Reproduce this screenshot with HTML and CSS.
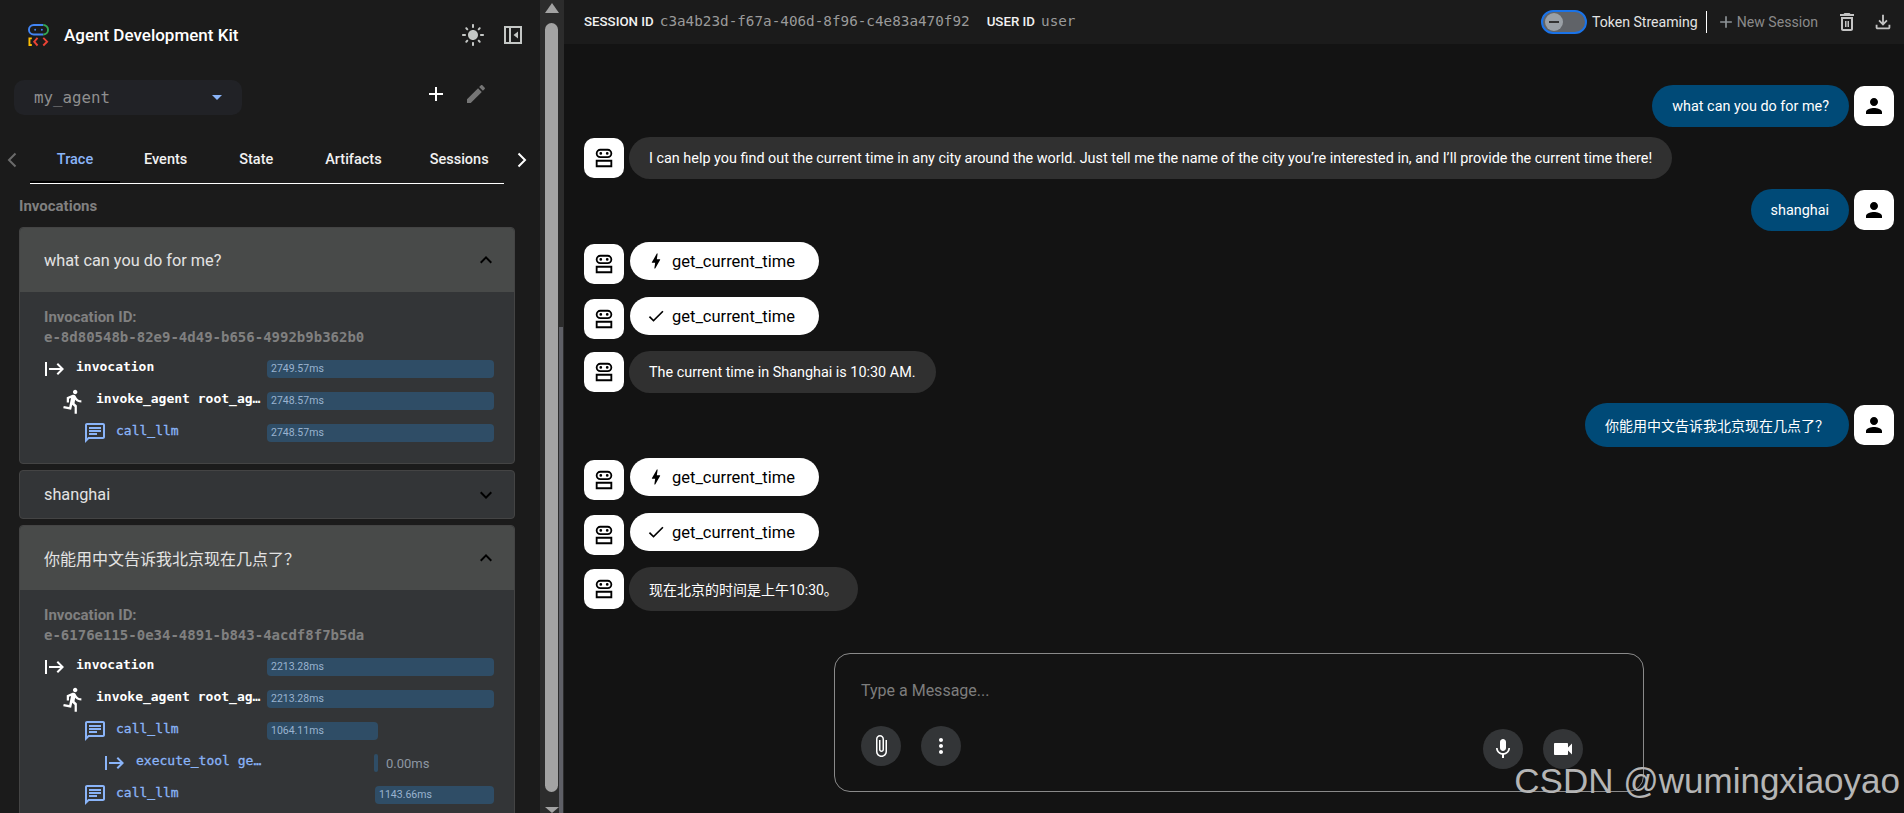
FILE: index.html
```html
<!DOCTYPE html>
<html lang="en">
<head>
  <meta charset="UTF-8" />
  <meta name="viewport" content="width=device-width, initial-scale=1.0"/>
  <title>Agent Development Kit</title>
  <link rel="stylesheet" href="styles.css">
</head>
<body>

  <svg class="sprite" xmlns="http://www.w3.org/2000/svg">
    <symbol id="i-sun" viewBox="0 0 24 24"><path d="M12 7c-2.76 0-5 2.24-5 5s2.24 5 5 5 5-2.24 5-5-2.24-5-5-5zM2 13h2c.55 0 1-.45 1-1s-.45-1-1-1H2c-.55 0-1 .45-1 1s.45 1 1 1zm18 0h2c.55 0 1-.45 1-1s-.45-1-1-1h-2c-.55 0-1 .45-1 1s.45 1 1 1zM11 2v2c0 .55.45 1 1 1s1-.45 1-1V2c0-.55-.45-1-1-1s-1 .45-1 1zm0 18v2c0 .55.45 1 1 1s1-.45 1-1v-2c0-.55-.45-1-1-1s-1 .45-1 1zM5.99 4.58c-.39-.39-1.03-.39-1.41 0-.39.39-.39 1.03 0 1.41l1.06 1.06c.39.39 1.03.39 1.41 0s.39-1.03 0-1.41L5.99 4.58zm12.37 12.37c-.39-.39-1.03-.39-1.41 0-.39.39-.39 1.03 0 1.41l1.06 1.06c.39.39 1.03.39 1.41 0 .39-.39.39-1.03 0-1.41l-1.06-1.06zm1.06-10.96c.39-.39.39-1.03 0-1.41-.39-.39-1.03-.39-1.41 0l-1.06 1.06c-.39.39-.39 1.03 0 1.41s1.03.39 1.41 0l1.06-1.06zM7.05 18.36c.39-.39.39-1.03 0-1.41-.39-.39-1.03-.39-1.41 0l-1.06 1.06c-.39.39-.39 1.03 0 1.41s1.03.39 1.41 0l1.06-1.06z"/></symbol>
    <symbol id="i-panel" viewBox="0 0 24 24"><path d="M3 3h18v18H3V3zm2 2v14h3V5H5zm5 0v14h9V5h-9zm7 3.5v7L12.5 12 17 8.5z"/></symbol>
    <symbol id="i-add" viewBox="0 0 24 24"><path d="M19 13h-6v6h-2v-6H5v-2h6V5h2v6h6v2z"/></symbol>
    <symbol id="i-edit" viewBox="0 0 24 24"><path d="M3 17.25V21h3.75L17.81 9.94l-3.75-3.75L3 17.25zM20.71 7.04c.39-.39.39-1.02 0-1.41l-2.34-2.34c-.39-.39-1.02-.39-1.41 0l-1.83 1.83 3.75 3.75 1.83-1.83z"/></symbol>
    <symbol id="i-less" viewBox="0 0 24 24"><path d="M12 8l-6 6 1.41 1.41L12 10.83l4.59 4.58L18 14z"/></symbol>
    <symbol id="i-more" viewBox="0 0 24 24"><path d="M16.59 8.59L12 13.17 7.41 8.59 6 10l6 6 6-6z"/></symbol>
    <symbol id="i-start" viewBox="0 0 24 24"><path d="M3 5v14h2V5zm13 1-1.41 1.41L18.17 11H7v2h11.17l-3.58 3.59L16 18l6-6z"/></symbol>
    <symbol id="i-run" viewBox="0 0 24 24"><path d="M13.49 5.48c1.1 0 2-.9 2-2s-.9-2-2-2-2 .9-2 2 .9 2 2 2zm-3.6 13.9l1-4.4 2.1 2v6h2v-7.5l-2.1-2 .6-3c1.3 1.5 3.3 2.5 5.5 2.5v-2c-1.9 0-3.5-1-4.3-2.4l-1-1.6c-.4-.6-1-1-1.7-1-.3 0-.5.1-.8.1l-5.2 2.2v4.7h2v-3.4l1.8-.7-1.6 8.1-4.9-1-.4 2 7 1.4z"/></symbol>
    <symbol id="i-chat" viewBox="0 0 24 24"><path d="M20 2H4c-1.1 0-1.99.9-1.99 2L2 22l4-4h14c1.1 0 2-.9 2-2V4c0-1.1-.9-2-2-2zm0 14H5.17L4 17.17V4h16v12zM6 12h8v2H6zm0-3h12v2H6zm0-3h12v2H6z"/></symbol>
    <symbol id="i-robot" viewBox="0 0 24 24"><path d="M8 2h8a5 5 0 0 1 0 10H8A5 5 0 0 1 8 2zm0 2a3 3 0 0 0 0 6h8a3 3 0 0 0 0-6H8zm.5 1.5a1.5 1.5 0 1 1 0 3 1.5 1.5 0 0 1 0-3zm7 0a1.5 1.5 0 1 1 0 3 1.5 1.5 0 0 1 0-3zM3 14h18v8H3v-8zm2 2v4h14v-4H5z"/></symbol>
    <symbol id="i-person" viewBox="0 0 24 24"><path d="M12 12c2.21 0 4-1.79 4-4s-1.79-4-4-4-4 1.79-4 4 1.79 4 4 4zm0 2c-2.67 0-8 1.34-8 4v2h16v-2c0-2.66-5.33-4-8-4z"/></symbol>
    <symbol id="i-bolt" viewBox="0 0 24 24"><path d="M11 21h-1l1-7H7.5c-.58 0-.57-.32-.38-.66.19-.34.05-.08.07-.12C8.48 10.94 10.42 7.54 13 3h1l-1 7h3.5c.49 0 .56.33.47.51l-.07.15C12.96 17.55 11 21 11 21z"/></symbol>
    <symbol id="i-check" viewBox="0 0 24 24"><path d="M9 16.17L4.83 12l-1.42 1.41L9 19 21 7l-1.41-1.41z"/></symbol>
    <symbol id="i-trash" viewBox="0 0 24 24"><path d="M6 19c0 1.1.9 2 2 2h8c1.1 0 2-.9 2-2V7H6v12zM8 9h8v10H8V9zm7.5-5l-1-1h-5l-1 1H5v2h14V4zM10 11h1.5v6H10zm2.5 0H14v6h-1.5z"/></symbol>
    <symbol id="i-download" viewBox="0 0 24 24"><path d="M18 15v3H6v-3H4v3c0 1.1.9 2 2 2h12c1.1 0 2-.9 2-2v-3h-2zm-1-4l-1.41-1.41L13 12.17V4h-2v8.17L8.41 9.59 7 11l5 5 5-5z"/></symbol>
    <symbol id="i-clip" viewBox="0 0 24 24"><path d="M16.5 6v11.5c0 2.21-1.79 4-4 4s-4-1.79-4-4V5c0-1.38 1.12-2.5 2.5-2.5s2.5 1.12 2.5 2.5v10.5c0 .55-.45 1-1 1s-1-.45-1-1V6H10v9.5c0 1.38 1.12 2.5 2.5 2.5s2.5-1.12 2.5-2.5V5c0-2.21-1.79-4-4-4S7 2.79 7 5v12.5c0 3.04 2.46 5.5 5.5 5.5s5.5-2.46 5.5-5.5V6h-1.5z"/></symbol>
    <symbol id="i-dots" viewBox="0 0 24 24"><path d="M12 8c1.1 0 2-.9 2-2s-.9-2-2-2-2 .9-2 2 .9 2 2 2zm0 2c-1.1 0-2 .9-2 2s.9 2 2 2 2-.9 2-2-.9-2-2-2zm0 6c-1.1 0-2 .9-2 2s.9 2 2 2 2-.9 2-2-.9-2-2-2z"/></symbol>
    <symbol id="i-mic" viewBox="0 0 24 24"><path d="M12 14c1.66 0 3-1.34 3-3V5c0-1.66-1.34-3-3-3S9 3.34 9 5v6c0 1.66 1.34 3 3 3zm5.3-3c0 3-2.54 5.1-5.3 5.1S6.7 14 6.7 11H5c0 3.41 2.72 6.23 6 6.72V21h2v-3.28c3.28-.48 6-3.3 6-6.72h-1.7z"/></symbol>
    <symbol id="i-video" viewBox="0 0 24 24"><path d="M17 10.5V7c0-.55-.45-1-1-1H4c-.55 0-1 .45-1 1v10c0 .55.45 1 1 1h12c.55 0 1-.45 1-1v-3.5l4 4v-11l-4 4z"/></symbol>
  </svg>

  <aside class="sidebar">
    <div class="side-head">
      <svg class="logo" viewBox="0 0 22 24" fill="none" stroke-width="2">
        <path d="M16 11.5H6A5 5 0 0 1 6 1.5h10" stroke="#4285f4"/>
        <path d="M16 1.500a5 5 0 0 1 0 10" stroke="#34a853"/>
        <circle cx="7.5" cy="6.5" r="1" fill="#4285f4" stroke="none"/>
        <circle cx="14.5" cy="6.5" r="1" fill="#4285f4" stroke="none"/>
        <path d="M4 15.5H1.5v7H4" stroke="#fbbc04"/>
        <path d="M10 15l-3.500 4 3.500 4" stroke="#ea4335"/>
        <path d="M16 15l4 4-4 4" stroke="#ea4335"/>
      </svg>
      <span class="app-title">Agent Development Kit</span>
      <svg class="ic ic-sun"><use href="#i-sun"/></svg>
      <svg class="ic ic-panel"><use href="#i-panel"/></svg>
    </div>

    <div class="agent-row">
      <div class="agent-select">
        <span>my_agent</span>
        <i class="caret"></i>
      </div>
      <svg class="ic ic-add"><use href="#i-add"/></svg>
      <svg class="ic ic-edit"><use href="#i-edit"/></svg>
    </div>

    <div class="tabs">
      <svg class="tab-arrow dim" viewBox="0 0 10 16"><path d="M8.5 1.5L2 8l6.5 6.5"/></svg>
      <div class="tab-list">
        <div class="tab active">Trace</div>
        <div class="tab">Events</div>
        <div class="tab">State</div>
        <div class="tab">Artifacts</div>
        <div class="tab">Sessions</div>
      </div>
      <svg class="tab-arrow" viewBox="0 0 10 16"><path d="M1.5 1.5L8 8l-6.5 6.500"/></svg>
    </div>

    <div class="section-label">Invocations</div>

    <div class="accordion">
      <div class="panel">
        <div class="panel-head open">
          <span>what can you do for me?</span>
          <svg class="ic ic-chev"><use href="#i-less"/></svg>
        </div>
        <div class="panel-body">
          <div class="inv-label">Invocation ID:</div>
          <div class="inv-id">e-8d80548b-82e9-4d49-b656-4992b9b362b0</div>
          <div class="spans">
            <div class="span-row">
              <div class="span-name"><svg class="ic"><use href="#i-start"/></svg><span>invocation</span></div>
              <div class="span-track"><div class="bar" style="width:100%">2749.57ms</div></div>
            </div>
            <div class="span-row lv1">
              <div class="span-name"><svg class="ic"><use href="#i-run"/></svg><span>invoke_agent root_ag…</span></div>
              <div class="span-track"><div class="bar" style="width:100%">2748.57ms</div></div>
            </div>
            <div class="span-row lv2 llm">
              <div class="span-name"><svg class="ic"><use href="#i-chat"/></svg><span>call_llm</span></div>
              <div class="span-track"><div class="bar" style="width:100%">2748.57ms</div></div>
            </div>
          </div>
        </div>
      </div>

      <div class="panel">
        <div class="panel-head">
          <span>shanghai</span>
          <svg class="ic ic-chev"><use href="#i-more"/></svg>
        </div>
      </div>

      <div class="panel">
        <div class="panel-head open head-cjk">
          <span>你能用中文告诉我北京现在几点了？</span>
          <svg class="ic ic-chev"><use href="#i-less"/></svg>
        </div>
        <div class="panel-body">
          <div class="inv-label">Invocation ID:</div>
          <div class="inv-id">e-6176e115-0e34-4891-b843-4acdf8f7b5da</div>
          <div class="spans">
            <div class="span-row">
              <div class="span-name"><svg class="ic"><use href="#i-start"/></svg><span>invocation</span></div>
              <div class="span-track"><div class="bar" style="width:100%">2213.28ms</div></div>
            </div>
            <div class="span-row lv1">
              <div class="span-name"><svg class="ic"><use href="#i-run"/></svg><span>invoke_agent root_ag…</span></div>
              <div class="span-track"><div class="bar" style="width:100%">2213.28ms</div></div>
            </div>
            <div class="span-row lv2 llm">
              <div class="span-name"><svg class="ic"><use href="#i-chat"/></svg><span>call_llm</span></div>
              <div class="span-track"><div class="bar" style="width:48.9%">1064.11ms</div></div>
            </div>
            <div class="span-row lv3 llm">
              <div class="span-name"><svg class="ic"><use href="#i-start"/></svg><span>execute_tool ge…</span></div>
              <div class="span-track"><div class="bar bar-thin" style="margin-left:47.1%"></div><span class="bar-out">0.00ms</span></div>
            </div>
            <div class="span-row lv2 llm">
              <div class="span-name"><svg class="ic"><use href="#i-chat"/></svg><span>call_llm</span></div>
              <div class="span-track"><div class="bar" style="margin-left:47.6%;width:52.4%">1143.66ms</div></div>
            </div>
          </div>
        </div>
      </div>
    </div>
  </aside>

  <div class="scrollbar">
    <i class="sb-up"></i>
    <div class="sb-thumb"></div>
    <i class="sb-down"></i>
    <div class="resize-handle"></div>
  </div>

  <main class="main">
    <div class="topbar">
      <span class="meta-label">SESSION ID</span>
      <span class="meta-value">c3a4b23d-f67a-406d-8f96-c4e83a470f92</span>
      <span class="meta-label user-label">USER ID</span>
      <span class="meta-value">user</span>
      <div class="top-actions">
        <div class="toggle"><div class="toggle-knob"></div></div>
        <span class="toggle-text">Token Streaming</span>
        <i class="top-sep"></i>
        <svg class="ic ic-new"><use href="#i-add"/></svg>
        <span class="new-session">New Session</span>
        <svg class="ic ic-trash"><use href="#i-trash"/></svg>
        <svg class="ic ic-download"><use href="#i-download"/></svg>
      </div>
    </div>

    <div class="messages">
      <div class="msg msg-user">
        <div class="bubble user">what can you do for me?</div>
        <div class="avatar"><svg class="ic"><use href="#i-person"/></svg></div>
      </div>
      <div class="msg">
        <div class="avatar"><svg class="ic ic-robot"><use href="#i-robot"/></svg></div>
        <div class="bubble">I can help you find out the current time in any city around the world. Just tell me the name of the city you’re interested in, and I’ll provide the current time there!</div>
      </div>
      <div class="msg msg-user">
        <div class="bubble user">shanghai</div>
        <div class="avatar"><svg class="ic"><use href="#i-person"/></svg></div>
      </div>
      <div class="msg msg-tool">
        <div class="avatar"><svg class="ic ic-robot"><use href="#i-robot"/></svg></div>
        <div class="tool-pill"><svg class="ic"><use href="#i-bolt"/></svg>get_current_time</div>
      </div>
      <div class="msg msg-tool">
        <div class="avatar"><svg class="ic ic-robot"><use href="#i-robot"/></svg></div>
        <div class="tool-pill"><svg class="ic"><use href="#i-check"/></svg>get_current_time</div>
      </div>
      <div class="msg">
        <div class="avatar"><svg class="ic ic-robot"><use href="#i-robot"/></svg></div>
        <div class="bubble">The current time in Shanghai is 10:30 AM.</div>
      </div>
      <div class="msg msg-user msg-cjk">
        <div class="bubble user">你能用中文告诉我北京现在几点了？</div>
        <div class="avatar"><svg class="ic"><use href="#i-person"/></svg></div>
      </div>
      <div class="msg msg-tool">
        <div class="avatar"><svg class="ic ic-robot"><use href="#i-robot"/></svg></div>
        <div class="tool-pill"><svg class="ic"><use href="#i-bolt"/></svg>get_current_time</div>
      </div>
      <div class="msg msg-tool">
        <div class="avatar"><svg class="ic ic-robot"><use href="#i-robot"/></svg></div>
        <div class="tool-pill"><svg class="ic"><use href="#i-check"/></svg>get_current_time</div>
      </div>
      <div class="msg msg-cjk">
        <div class="avatar"><svg class="ic ic-robot"><use href="#i-robot"/></svg></div>
        <div class="bubble">现在北京的时间是上午10:30。</div>
      </div>
    </div>

    <div class="composer">
      <div class="placeholder">Type a Message...</div>
      <div class="composer-tools">
        <div class="round-btn"><svg class="ic"><use href="#i-clip"/></svg></div>
        <div class="round-btn"><svg class="ic"><use href="#i-dots"/></svg></div>
        <div class="tools-right">
          <div class="round-btn"><svg class="ic"><use href="#i-mic"/></svg></div>
          <div class="round-btn"><svg class="ic"><use href="#i-video"/></svg></div>
        </div>
      </div>
    </div>
  </main>

  <div class="watermark">CSDN @wumingxiaoyao</div>

</body>
</html>
```

FILE: styles.css
```css
* { box-sizing: border-box; }
html, body { height: 100%; }
body {
  margin: 0;
  display: flex;
  height: 813px;
  overflow: hidden;
  background: #131313;
  color: #e3e3e3;
  font-family: Roboto, "Noto Sans CJK SC", sans-serif;
  font-size: 14.4px;
}
.sprite { display: none; }
.ic {
  display: block;
  width: 24px;
  height: 24px;
  fill: currentColor;
  flex: none;
}

/* sidebar */
.sidebar {
  width: 540px;
  flex: none;
  height: 813px;
  overflow: hidden;
  background: #1b1b1b;
}
.side-head {
  height: 70px;
  display: flex;
  align-items: center;
  padding-left: 28px;
}
.logo { width: 21px; height: 24px; flex: none; }
.app-title {
  margin-left: 15px;
  font-size: 17px;
  font-weight: 500;
  color: #fff;
}
.ic-sun { margin-left: auto; color: #c4c7c5; }
.ic-panel { margin-left: 16px; margin-right: 15px; color: #c4c7c5; }

.agent-row {
  display: flex;
  align-items: center;
  height: 35px;
  margin-top: 10px;
  padding-left: 14px;
}
.agent-select {
  width: 228px;
  height: 35px;
  display: flex;
  align-items: center;
  justify-content: space-between;
  padding: 0 20px;
  background: #212226;
  border-radius: 10px;
  color: #8f8f8f;
  font-family: "DejaVu Sans Mono", monospace;
  font-size: 15.8px;
}
.caret {
  width: 0;
  height: 0;
  border-left: 5px solid transparent;
  border-right: 5px solid transparent;
  border-top: 5px solid #8ab4f8;
}
.ic-add { margin-left: 182px; margin-top: -7px; color: #fff; }
.ic-edit { margin-left: 16px; margin-top: -7px; color: #757575; }

.tabs {
  display: flex;
  align-items: center;
  height: 49px;
  margin-top: 20px;
  padding-left: 7px;
}
.tab-arrow {
  width: 10px;
  height: 16px;
  flex: none;
  fill: none;
  stroke: #fff;
  stroke-width: 2;
}
.tab-arrow.dim { stroke: #6b6b6b; }
.tab-list {
  width: 474px;
  height: 49px;
  margin: 0 13px;
  display: flex;
  overflow: hidden;
  border-bottom: 1px solid #fff;
}
.tab {
  min-width: 90px;
  flex: none;
  padding: 0 24px;
  line-height: 50px;
  text-align: center;
  color: #f1f1f1;
  font-size: 14.5px;
  font-weight: 500;
}
.tab.active {
  color: #8ab4f8;
  border-bottom: 2px solid #000;
  height: 48px;
}

.section-label {
  margin: 12px 0 0 19px;
  line-height: 20px;
  color: #808080;
  font-size: 15px;
  font-weight: 700;
}

.accordion {
  margin: 11px 0 0 19px;
  width: 496px;
  display: flex;
  flex-direction: column;
  gap: 6px;
}
.panel {
  background: #333537;
  border: 1px solid #444;
  border-radius: 4px;
}
.panel-head {
  height: 47px;
  display: flex;
  align-items: center;
  justify-content: space-between;
  padding: 0 16px 0 24px;
  font-size: 16.3px;
  color: #e3e3e3;
}
.panel-head.open {
  height: 64px;
  background: #484a49;
  border-radius: 4px 4px 0 0;
}
.panel-head.head-cjk { font-size: 16px; }
.ic-chev { color: #000; }
.panel-body { padding: 15px 20px 21px 22px; }
.inv-label {
  line-height: 20px;
  padding-left: 2px;
  color: #808080;
  font-size: 15px;
  font-weight: 700;
}
.inv-id {
  line-height: 20px;
  padding-left: 2px;
  color: #808080;
  font-family: "DejaVu Sans Mono", monospace;
  font-size: 14px;
  font-weight: bold;
}
.spans {
  margin-top: 13px;
  display: flex;
  flex-direction: column;
  gap: 14px;
}
.span-row {
  display: flex;
  align-items: center;
  height: 18px;
  color: #fff;
}
.span-row.llm { color: #8ab4f8; }
.span-name {
  width: 225px;
  flex: none;
  display: flex;
  align-items: center;
  gap: 10px;
  min-width: 0;
}
.lv1 .span-name { padding-left: 20px; }
.lv2 .span-name { padding-left: 41px; gap: 9px; }
.lv3 .span-name { padding-left: 60px; }
.lv1 .ic { width: 27px; height: 27px; margin: -1px -1px -1px -2px; }
.span-name span {
  white-space: nowrap;
  margin-bottom: 6px;
  font-family: "DejaVu Sans Mono", monospace;
  font-size: 13px;
  font-weight: bold;
}
.llm .span-name span {
  font-weight: normal;
  -webkit-text-stroke: 0.3px currentColor;
}
.span-track {
  flex: 1;
  display: flex;
  align-items: center;
  height: 18px;
}
.bar {
  height: 18px;
  padding-left: 4px;
  background: #2f4d66;
  border-radius: 4px;
  color: #9ab3cf;
  font-size: 10.5px;
  line-height: 18px;
  white-space: nowrap;
}
.bar-thin { width: 4px; padding: 0; border-radius: 2px; flex: none; }
.bar-out { margin-left: 8px; color: #8d97a3; font-size: 13px; }

/* scrollbar column */
.scrollbar {
  position: relative;
  width: 24px;
  flex: none;
  height: 813px;
  display: flex;
  flex-direction: column;
  padding-left: 5px;
  background: #2c2c2c;
}
.sb-up, .sb-down {
  width: 0;
  height: 0;
  border-left: 7px solid transparent;
  border-right: 7px solid transparent;
}
.sb-up { margin-top: 3px; border-bottom: 10px solid #a3a3a3; }
.sb-down { margin-top: 15px; border-top: 6px solid #a3a3a3; }
.sb-thumb {
  width: 13px;
  height: 769px;
  margin-top: 10px;
  background: #a3a3a3;
  border-radius: 7px;
}
.resize-handle {
  position: absolute;
  left: 19px;
  top: 327px;
  width: 4px;
  height: 486px;
  background: #5e5f66;
}

/* main area */
.main {
  flex: 1;
  min-width: 0;
  height: 813px;
  display: flex;
  flex-direction: column;
}
.topbar {
  height: 44px;
  flex: none;
  display: flex;
  align-items: center;
  padding: 0 10px 2px 20px;
  background: #1b1b1b;
}
.meta-label {
  font-size: 13.3px;
  font-weight: 500;
  color: #f1f1f1;
}
.user-label { margin-left: 17px; }
.meta-value {
  margin-left: 6px;
  color: #9a9a9a;
  font-family: "DejaVu Sans Mono", monospace;
  font-size: 14.3px;
}
.top-actions {
  margin-left: auto;
  display: flex;
  align-items: center;
  margin-top: 1px;
  font-size: 14.1px;
}
.toggle {
  width: 46px;
  height: 24px;
  padding: 2px 0 0 2px;
  background: #606368;
  border: 2px solid #1a73e8;
  border-radius: 12px;
}
.toggle-knob {
  position: relative;
  width: 18px;
  height: 18px;
  margin-top: -1px;
  background: #9aa0a6;
  border-radius: 50%;
}
.toggle-knob::after {
  content: "";
  position: absolute;
  left: 4px;
  top: 8px;
  width: 10px;
  height: 2px;
  background: #333;
}
.toggle-text {
  margin-left: 5px;
  color: #e3e3e3;
}
.top-sep {
  width: 1px;
  height: 22px;
  margin-left: 8px;
  background: #fff;
}
.ic-new { margin-left: 9px; margin-right: 1px; color: #8d9296; width: 20px; height: 20px; }
.new-session { color: #8a8a8a; }
.ic-trash { margin-left: 17px; color: #c4c4c4; }
.ic-download { margin-left: 13px; color: #c4c4c4; width: 22px; height: 22px; }

.messages {
  flex: 1;
  min-height: 0;
  padding: 41px 10px 0 20px;
  display: flex;
  flex-direction: column;
  gap: 10px;
}
.msg {
  display: flex;
  align-items: center;
  gap: 5px;
  height: 42px;
  flex: none;
}
.msg-cjk { height: 44px; font-size: 14px; }
.msg-user { justify-content: flex-end; }
.msg-tool {
  align-items: flex-start;
  margin: 1px 0 2px;
}
.avatar {
  width: 40px;
  height: 40px;
  flex: none;
  display: flex;
  align-items: center;
  justify-content: center;
  background: #fff;
  border-radius: 10px;
  color: #000;
}
.ic-robot { width: 22px; height: 22px; }
.msg-tool .avatar { margin-top: 2px; }
.bubble {
  height: 100%;
  padding: 0 20px;
  display: flex;
  align-items: center;
  background: #303030;
  border-radius: 22px;
  color: #fff;
  white-space: nowrap;
}
.bubble.user { background: #004a77; }
.tool-pill {
  height: 38px;
  margin-left: 1px;
  padding: 0 24px 0 16px;
  display: flex;
  align-items: center;
  gap: 6px;
  background: #fff;
  border-radius: 19px;
  color: #000;
  font-size: 16.5px;
}
.tool-pill .ic { width: 20px; height: 20px; }

.composer {
  flex: none;
  width: 810px;
  height: 139px;
  margin: 0 0 21px 270px;
  padding: 27px 26px 0;
  border: 1px solid #8a8a8a;
  border-radius: 16px;
}
.placeholder {
  line-height: 20px;
  color: #7d7d7d;
  font-size: 16px;
}
.composer-tools {
  margin-top: 25px;
  display: flex;
  gap: 20px;
}
.tools-right {
  margin-left: auto;
  margin-top: 3px;
  margin-right: 34px;
  display: flex;
  gap: 20px;
}
.round-btn {
  width: 40px;
  height: 40px;
  display: flex;
  align-items: center;
  justify-content: center;
  background: #333537;
  border-radius: 50%;
  color: #fff;
}

.watermark {
  position: absolute;
  right: 4px;
  bottom: 12px;
  color: #b5b5b5;
  font-family: "Liberation Sans", sans-serif;
  font-size: 35px;
  line-height: 40px;
}
```
